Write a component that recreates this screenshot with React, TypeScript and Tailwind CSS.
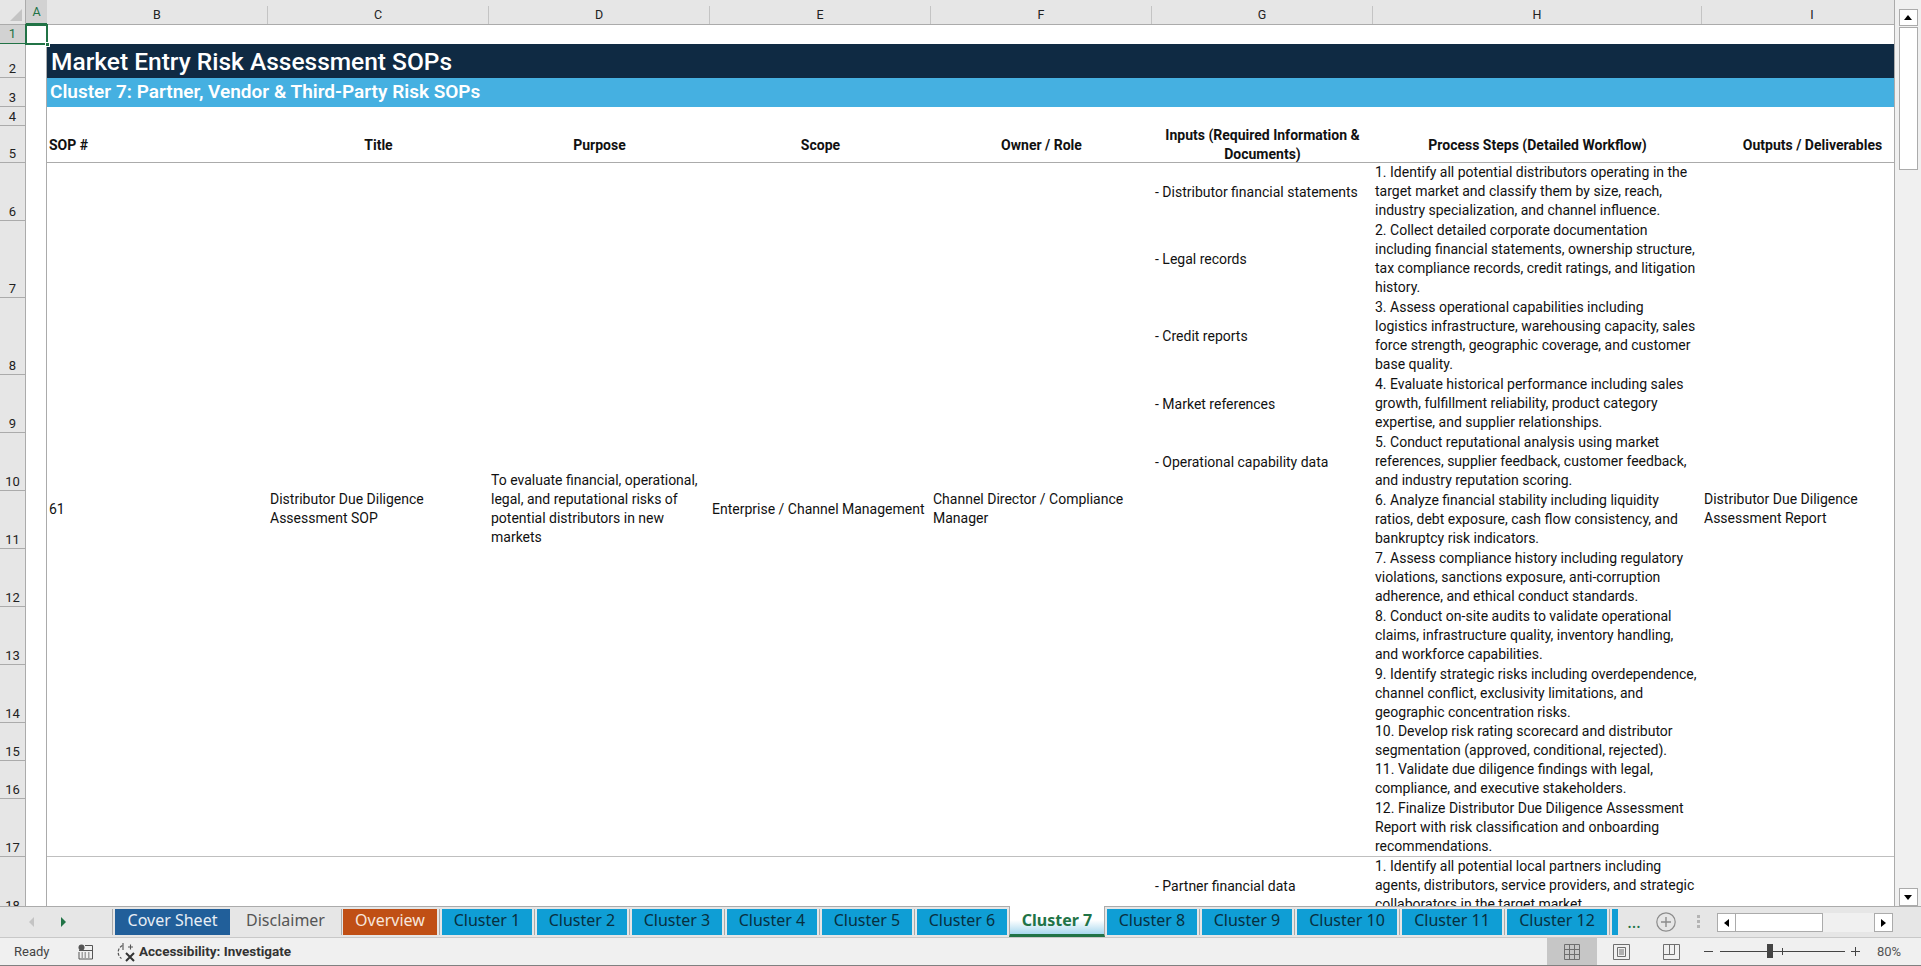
const bodyFont = "font-['Roboto','Liberation_Sans',sans-serif]"

const columns = ['B', 'C', 'D', 'E', 'F', 'G', 'H', 'I']

// sheet row number -> grid row is number + 1, col header takes the first track
const rows: { n: number; input?: string; steps?: string[] }[] = [
  {
    n: 6,
    input: '- Distributor financial statements',
    steps: [
      '1. Identify all potential distributors operating in the',
      'target market and classify them by size, reach,',
      'industry specialization, and channel influence.',
    ],
  },
  {
    n: 7,
    input: '- Legal records',
    steps: [
      '2. Collect detailed corporate documentation',
      'including financial statements, ownership structure,',
      'tax compliance records, credit ratings, and litigation',
      'history.',
    ],
  },
  {
    n: 8,
    input: '- Credit reports',
    steps: [
      '3. Assess operational capabilities including',
      'logistics infrastructure, warehousing capacity, sales',
      'force strength, geographic coverage, and customer',
      'base quality.',
    ],
  },
  {
    n: 9,
    input: '- Market references',
    steps: [
      '4. Evaluate historical performance including sales',
      'growth, fulfillment reliability, product category',
      'expertise, and supplier relationships.',
    ],
  },
  {
    n: 10,
    input: '- Operational capability data',
    steps: [
      '5. Conduct reputational analysis using market',
      'references, supplier feedback, customer feedback,',
      'and industry reputation scoring.',
    ],
  },
  {
    n: 11,
    steps: [
      '6. Analyze financial stability including liquidity',
      'ratios, debt exposure, cash flow consistency, and',
      'bankruptcy risk indicators.',
    ],
  },
  {
    n: 12,
    steps: [
      '7. Assess compliance history including regulatory',
      'violations, sanctions exposure, anti-corruption',
      'adherence, and ethical conduct standards.',
    ],
  },
  {
    n: 13,
    steps: [
      '8. Conduct on-site audits to validate operational',
      'claims, infrastructure quality, inventory handling,',
      'and workforce capabilities.',
    ],
  },
  {
    n: 14,
    steps: [
      '9. Identify strategic risks including overdependence,',
      'channel conflict, exclusivity limitations, and',
      'geographic concentration risks.',
    ],
  },
  {
    n: 15,
    steps: ['10. Develop risk rating scorecard and distributor', 'segmentation (approved, conditional, rejected).'],
  },
  {
    n: 16,
    steps: ['11. Validate due diligence findings with legal,', 'compliance, and executive stakeholders.'],
  },
  {
    n: 17,
    steps: [
      '12. Finalize Distributor Due Diligence Assessment',
      'Report with risk classification and onboarding',
      'recommendations.',
    ],
  },
  {
    n: 18,
    input: '- Partner financial data',
    steps: [
      '1. Identify all potential local partners including',
      'agents, distributors, service providers, and strategic',
      'collaborators in the target market.',
    ],
  },
]

const clusterTabs = ['Cluster 1', 'Cluster 2', 'Cluster 3', 'Cluster 4', 'Cluster 5', 'Cluster 6']
const laterTabs = ['Cluster 8', 'Cluster 9', 'Cluster 10', 'Cluster 11', 'Cluster 12']

function Lines({ lines }: { lines: string[] }) {
  return (
    <>
      {lines.map((l) => (
        <div key={l} className="h-[19px] whitespace-nowrap">
          {l}
        </div>
      ))}
    </>
  )
}

function Sep() {
  return <div className="mx-[2px] h-[26px] w-px shrink-0 bg-[#ababab]" />
}

function Tab({ label, className }: { label: string; className: string }) {
  return (
    <div className={`flex h-[26px] shrink-0 items-center justify-center pb-[4px] text-[16px] ${className}`}>
      {label}
    </div>
  )
}

function Sheet() {
  return (
    <div className="grid h-[906px] w-[2027px] grid-cols-[26px_21px_221px_221px_221px_221px_221px_221px_329px_221px] grid-rows-[25px_19px_34px_29px_19px_37px_58px_77px_77px_58px_58px_58px_58px_58px_58px_38px_38px_58px_58px] overflow-hidden bg-white">
      {/* column headers */}
      <div className="relative border-b border-r border-[#ababab] bg-[#e6e6e6]">
        <div className="absolute bottom-[3px] right-[3px] h-0 w-0 border-b-[12px] border-l-[12px] border-b-[#c4c4c4] border-l-transparent" />
      </div>
      <div className="flex items-end justify-center border-b-2 border-[#217346] bg-[#d2d2d2] pb-[1px] text-[12.5px] text-[#217346]">
        A
      </div>
      {columns.map((c) => (
        <div key={c} className="border-b border-[#ababab] bg-[#e6e6e6]">
          <div className="mt-[6px] flex h-[18px] items-center justify-center border-r border-[#c4c4c4] text-[12.5px] text-[#222]">
            {c}
          </div>
        </div>
      ))}

      {/* row headers */}
      {[1, 2, 3, 4, 5].map((n) => (
        <div
          key={n}
          style={{ gridRowStart: n + 1, gridColumnStart: 1 }}
          className={
            n === 1
              ? 'flex items-end justify-center border-b border-r border-[#217346] bg-[#d2d2d2] text-[13px] leading-[18px] text-[#217346]'
              : 'flex items-end justify-center border-b border-r border-[#ababab] bg-[#e6e6e6] text-[13px] leading-[17px] text-[#222]'
          }
        >
          {n}
        </div>
      ))}
      {rows.map((r) => (
        <div
          key={r.n}
          style={{ gridRowStart: r.n + 1, gridColumnStart: 1 }}
          className="flex items-end justify-center border-b border-r border-[#ababab] bg-[#e6e6e6] text-[13px] leading-[17px] text-[#222]"
        >
          {r.n}
        </div>
      ))}

      {/* column A */}
      <div className="relative col-start-2 row-start-2">
        <div className="absolute -left-px -top-px h-[21px] w-[23px] border-2 border-[#217346]" />
        <div className="absolute -right-[3px] bottom-[-3px] h-[5px] w-[5px] border border-white bg-[#217346]" />
      </div>
      <div className="col-start-2 row-start-3 row-end-[20] border-r border-[#ababab]" />

      {/* title bands */}
      <div className="col-start-3 col-end-[11] row-start-3 flex items-center bg-[#0f2a43] pl-[4px] pt-[2px] text-[24.5px] font-medium text-white">
        Market Entry Risk Assessment SOPs
      </div>
      <div className="col-start-3 col-end-[11] row-start-4 flex items-center bg-[#45b0e1] pl-[3px] text-[19px] font-semibold text-white">
        Cluster 7: Partner, Vendor &amp; Third-Party Risk SOPs
      </div>

      {/* table header */}
      <div className="col-start-3 col-end-[11] row-start-6 grid grid-cols-subgrid border-b border-[#ababab] pb-[2px] text-[14px] font-bold leading-[19px] text-[#111]">
        <div className="self-center pl-[2px]">SOP #</div>
        <div className="self-center text-center">Title</div>
        <div className="self-center text-center">Purpose</div>
        <div className="self-center text-center">Scope</div>
        <div className="self-center text-center">Owner / Role</div>
        <div className="self-center text-center">
          <div>Inputs (Required Information &amp;</div>
          <div>Documents)</div>
        </div>
        <div className="self-center text-center">Process Steps (Detailed Workflow)</div>
        <div className="self-center text-center">Outputs / Deliverables</div>
      </div>

      {/* SOP 61 merged cells */}
      <div className="col-start-3 row-start-7 row-span-12 self-center pb-[2px] pl-[2px] text-[14px] leading-[19px] text-[#111]">61</div>
      <div className="col-start-4 row-start-7 row-span-12 self-center pb-[2px] pl-[2px] text-[14px] leading-[19px] text-[#111]">
        <Lines lines={['Distributor Due Diligence', 'Assessment SOP']} />
      </div>
      <div className="col-start-5 row-start-7 row-span-12 self-center pb-[2px] pl-[2px] text-[14px] leading-[19px] text-[#111]">
        <Lines lines={['To evaluate financial, operational,', 'legal, and reputational risks of', 'potential distributors in new', 'markets']} />
      </div>
      <div className="col-start-6 row-start-7 row-span-12 self-center pb-[2px] pl-[2px] text-[14px] leading-[19px] text-[#111]">
        <Lines lines={['Enterprise / Channel Management']} />
      </div>
      <div className="col-start-7 row-start-7 row-span-12 self-center pb-[2px] pl-[2px] text-[14px] leading-[19px] text-[#111]">
        <Lines lines={['Channel Director / Compliance', 'Manager']} />
      </div>
      <div className="col-start-10 row-start-7 row-span-12 self-center pb-[2px] pl-[2px] text-[14px] leading-[19px] text-[#111]">
        <Lines lines={['Distributor Due Diligence', 'Assessment Report']} />
      </div>

      {/* inputs and process steps */}
      {rows.map((r) => (
        <div
          key={`g${r.n}`}
          style={{ gridRowStart: r.n + 1, gridColumnStart: 8 }}
          className="self-center pl-[3px] text-[14px] leading-[19px] text-[#111]"
        >
          {r.input}
        </div>
      ))}
      {rows.map((r) => (
        <div
          key={`h${r.n}`}
          style={{ gridRowStart: r.n + 1, gridColumnStart: 9 }}
          className="self-end pb-[1px] pl-[2px] text-[14px] leading-[19px] text-[#111]"
        >
          <Lines lines={r.steps ?? []} />
        </div>
      ))}

      {/* line under row 17 */}
      <div className="col-start-3 col-end-[11] row-start-[18] self-end border-b border-[#bfbfbf]" />
    </div>
  )
}

function VerticalScrollbar() {
  return (
    <div className="flex h-[906px] w-[27px] shrink-0 flex-col items-center border-l border-[#ababab] bg-[#f0f0f0] pt-[9px]">
      <div className="flex h-[17px] w-[19px] items-center justify-center border border-[#ababab] bg-white">
        <div className="h-0 w-0 border-x-[4px] border-b-[5px] border-x-transparent border-b-black" />
      </div>
      <div className="mt-[1px] h-[143px] w-[19px] border border-[#ababab] bg-white" />
      <div className="mt-auto flex h-[18px] w-[19px] items-center justify-center border border-[#ababab] bg-white">
        <div className="h-0 w-0 border-x-[4px] border-t-[5px] border-x-transparent border-t-black" />
      </div>
    </div>
  )
}

function TabBar() {
  return (
    <div className="flex h-[32px] items-start border-y border-t-[#ababab] border-b-[#c8c8c8] bg-[#e6e6e6] pt-[2px] font-['Noto_Sans','Roboto',sans-serif]">
      <div className="flex h-[26px] w-[112px] shrink-0 items-center pl-[29px]">
        <div className="h-0 w-0 border-y-[5px] border-r-[5px] border-y-transparent border-r-[#c4c4c4]" />
        <div className="ml-[27px] h-0 w-0 border-y-[5px] border-l-[5px] border-y-transparent border-l-[#217346]" />
      </div>
      <div className="h-[26px] w-px shrink-0 bg-[#ababab]" />
      <div className="w-[2px] shrink-0" />
      <Tab label="Cover Sheet" className="w-[115px] bg-[#215f9a] text-[#e8eef5]" />
      <Tab label="Disclaimer" className="w-[111px] text-[#555]" />
      <div className="h-[26px] w-px shrink-0 bg-[#ababab]" />
      <div className="w-px shrink-0" />
      <Tab label="Overview" className="w-[94px] bg-[#c04f15] text-[#f7e6dc]" />
      <Sep />
      {clusterTabs.map((t) => (
        <div key={t} className="flex shrink-0 items-start">
          <Tab label={t} className="w-[90px] bg-[#0f9ed5] text-[#08303f]" />
          {t !== 'Cluster 6' && <Sep />}
        </div>
      ))}
      <div className="relative -mt-[3px] ml-[2px] flex h-[31px] w-[96px] shrink-0 items-center justify-center border-x border-b-[3px] border-x-[#ababab] border-b-[#217346] bg-gradient-to-b from-white via-white to-[#a8d8ee] pb-[1px] text-[16px] font-bold text-[#217346]">
        Cluster 7
      </div>
      <div className="w-[2px] shrink-0" />
      {laterTabs.map((t) => (
        <div key={t} className="flex shrink-0 items-start">
          <Tab label={t} className={`${t === 'Cluster 8' || t === 'Cluster 9' ? 'w-[90px]' : 'w-[100px]'} bg-[#0f9ed5] text-[#08303f]`} />
          <Sep />
        </div>
      ))}
      <div className="h-[26px] w-[6px] shrink-0 bg-[#0f9ed5]" />
      <div className="ml-[9px] w-[14px] shrink-0 text-center text-[17px] leading-[26px] text-[#217346]">…</div>
      <svg className="ml-[15px] mt-[3px] shrink-0" width="20" height="20" viewBox="0 0 20 20">
        <circle cx="10" cy="10" r="9.2" fill="none" stroke="#8c8c8c" strokeWidth="1.2" />
        <path d="M10 5v10M5 10h10" stroke="#8c8c8c" strokeWidth="1.4" />
      </svg>
      <div className="ml-[21px] mt-[6px] flex shrink-0 flex-col gap-[2px]">
        <div className="h-[3px] w-[3px] bg-[#b4b4b4]" />
        <div className="h-[3px] w-[3px] bg-[#b4b4b4]" />
        <div className="h-[3px] w-[3px] bg-[#b4b4b4]" />
      </div>
      <div className="ml-[17px] mt-[4px] flex h-[19px] w-[176px] shrink-0 bg-[#f0f0f0]">
        <div className="flex w-[19px] items-center justify-center border border-[#ababab] bg-white">
          <div className="h-0 w-0 border-y-[4px] border-r-[5px] border-y-transparent border-r-black" />
        </div>
        <div className="w-[87px] border-y border-r border-[#ababab] bg-white" />
        <div className="ml-auto flex w-[19px] items-center justify-center border border-[#ababab] bg-white">
          <div className="h-0 w-0 border-y-[4px] border-l-[5px] border-y-transparent border-l-black" />
        </div>
      </div>
    </div>
  )
}

function StatusBar() {
  return (
    <div className="flex h-[28px] items-center border-b border-[#808080] bg-[#f0f0f0] text-[#444]">
      <span className="ml-[14px] w-[64px] text-[13px]">Ready</span>
      <svg width="15" height="16" viewBox="0 0 15 16" className="shrink-0">
        <circle cx="3.5" cy="3.5" r="3" fill="#555" />
        <path d="M7 1.5h7.5V15H1V8" fill="none" stroke="#555" />
        <path d="M1 6.5h13.5" stroke="#555" />
        <path d="M3.5 9h1.5M6.5 9H8M10 9h1.5M3.5 11h1.5M6.5 11H8M10 11h1.5M3.5 13h1.5M6.5 13H8M10 13h1.5" stroke="#555" />
      </svg>
      <svg width="20" height="20" viewBox="0 0 20 20" className="ml-[23px] shrink-0">
        <path d="M6.5 3.5A7.5 7.5 0 0 0 5.5 16.5" fill="none" stroke="#555" strokeWidth="1.2" strokeDasharray="3 1.5" />
        <path d="M7 1v7M12 5h5M14.5 2.5v5" stroke="#555" strokeWidth="1.1" />
        <path d="M10 11l8 8M18 11l-8 8" stroke="#333" strokeWidth="2" />
      </svg>
      <span className="ml-[3px] whitespace-nowrap text-[13.5px] font-bold text-[#333]">Accessibility: Investigate</span>
      <div className="ml-auto flex h-full items-center">
        <div className="flex h-full w-[50px] items-center justify-center bg-[#c6c6c6]">
          <svg width="16" height="16" viewBox="0 0 16 16">
            <path d="M.5.5h15v15H.5zM.5 5.5h15M.5 10.5h15M5.5.5v15M10.5.5v15" fill="none" stroke="#6e6e6e" />
          </svg>
        </div>
        <svg width="17" height="16" viewBox="0 0 17 16" className="ml-[16px]">
          <path d="M.5.5h16v15H.5z" fill="none" stroke="#6e6e6e" />
          <path d="M4.5 3.5h8v9h-8zM6 6h5M6 8h5M6 10h5" fill="none" stroke="#6e6e6e" />
        </svg>
        <svg width="17" height="16" viewBox="0 0 17 16" className="ml-[33px]">
          <path d="M.5.5h16v15H.5zM.5 10.5h11V.5M6.5.5v10" fill="none" stroke="#6e6e6e" />
        </svg>
        <div className="ml-[24px] h-px w-[9px] bg-[#444]" />
        <div className="relative ml-[7px] h-px w-[125px] bg-[#444]">
          <div className="absolute left-[47px] top-[-7px] h-[14px] w-[6px] bg-[#444]" />
          <div className="absolute left-[62px] top-[-3px] h-[7px] w-px bg-[#444]" />
        </div>
        <svg width="9" height="9" viewBox="0 0 9 9" className="ml-[6px]">
          <path d="M4.5 0v9M0 4.5h9" stroke="#444" />
        </svg>
        <span className="ml-[17px] w-[44px] text-[13px] text-[#555]">80%</span>
      </div>
    </div>
  )
}

export default function App() {
  return (
    <div className={`flex h-[966px] w-[1921px] flex-col overflow-hidden bg-[#e6e6e6] ${bodyFont}`}>
      <div className="flex shrink-0">
        <div className="w-[1894px] shrink-0 overflow-hidden">
          <Sheet />
        </div>
        <VerticalScrollbar />
      </div>
      <TabBar />
      <StatusBar />
    </div>
  )
}
